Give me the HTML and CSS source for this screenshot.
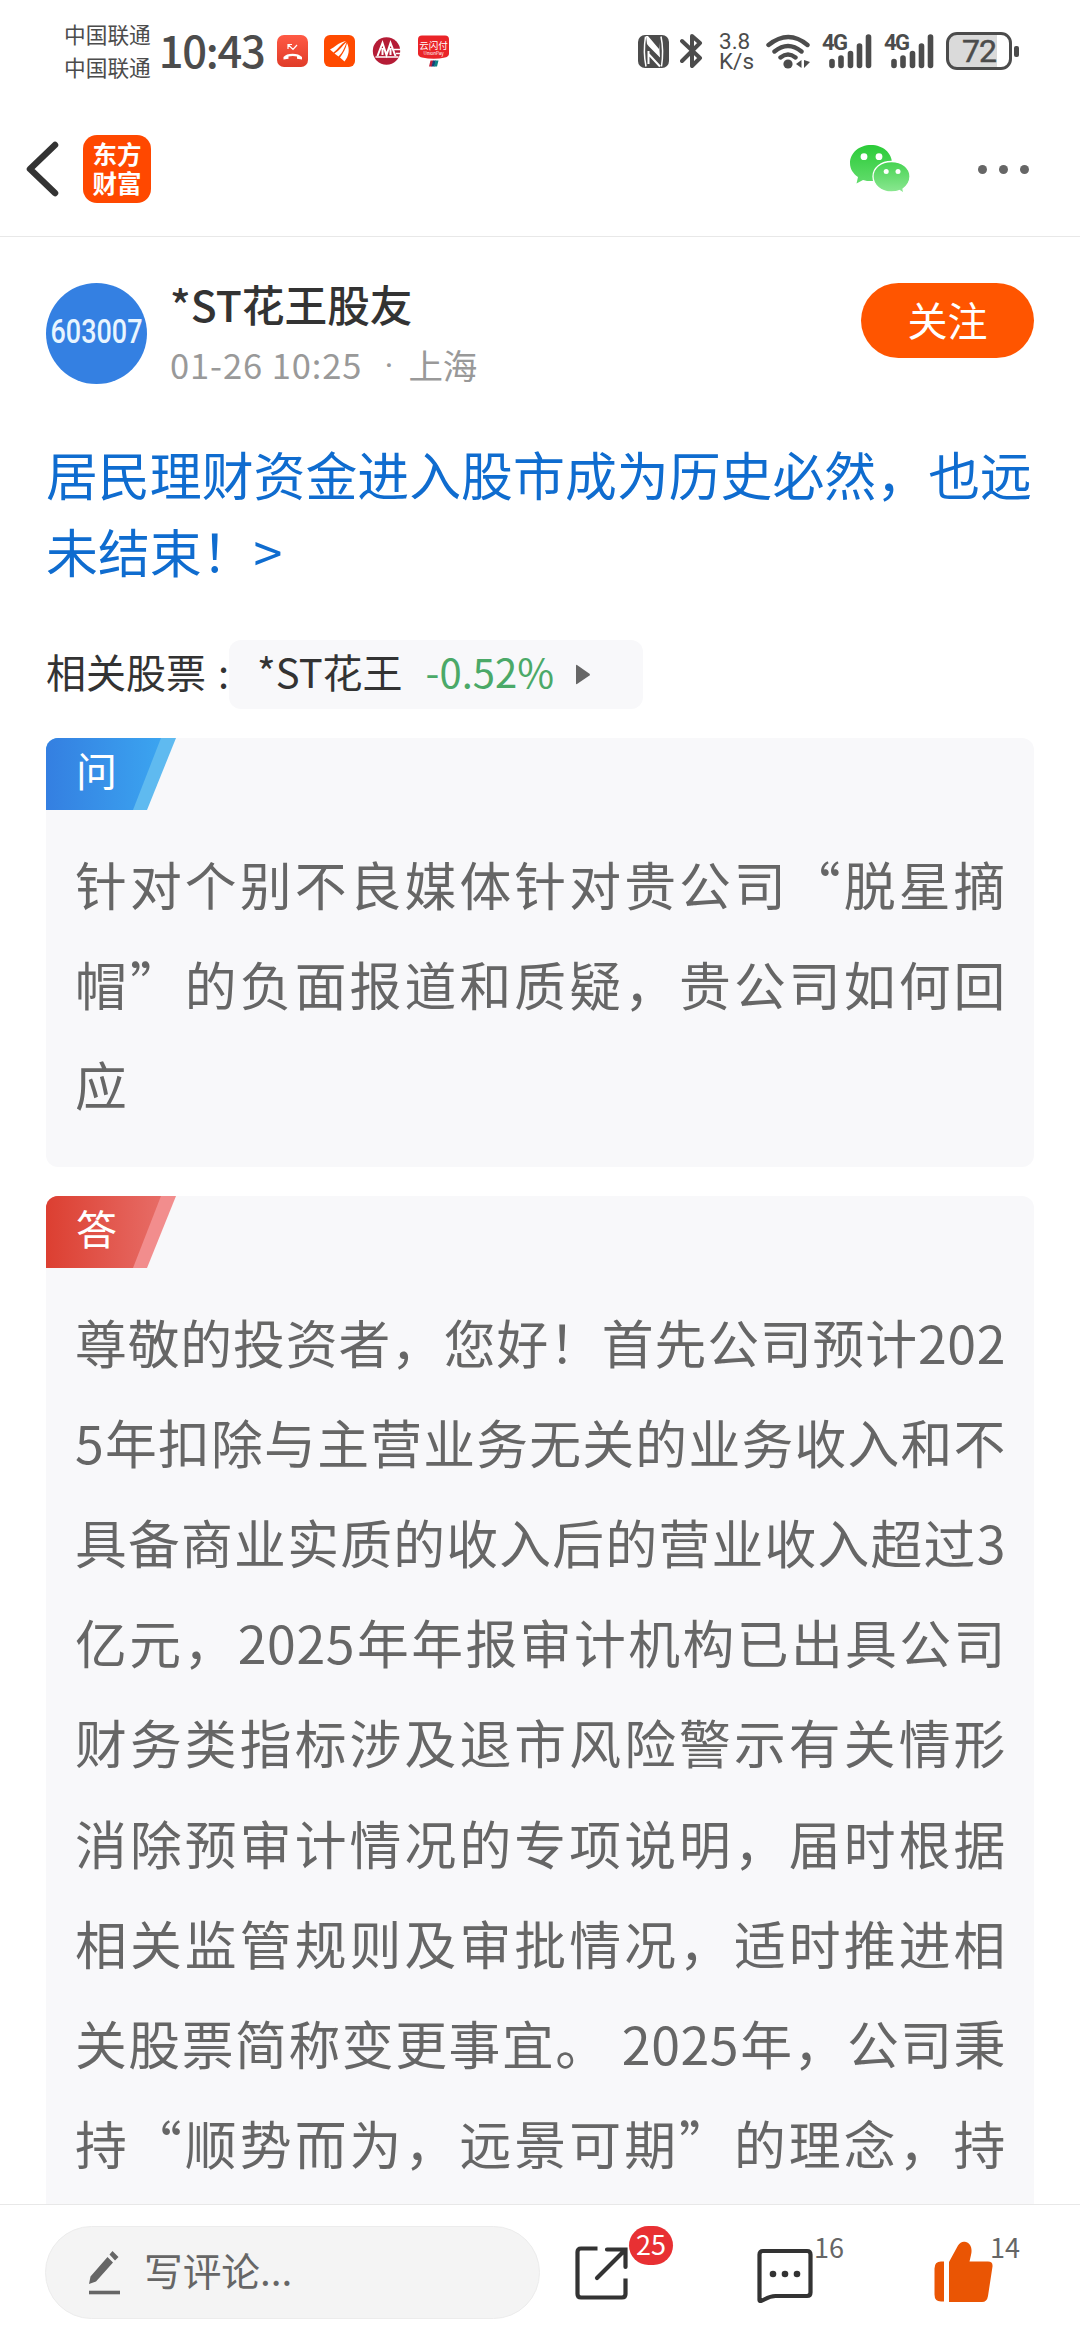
FILE: index.html
```html
<!DOCTYPE html>
<html lang="zh-CN">
<head>
  <meta charset="UTF-8" />
  <meta name="viewport" content="width=device-width, initial-scale=1.0"/>
  <title>*ST花王股吧</title>
  <link rel="stylesheet" href="styles.css">
</head>
<body>

  <!-- ===== STATUS BAR ===== -->
  <div class="status-bar">
    <div class="carrier">
      <span>中国联通</span>
      <span>中国联通</span>
    </div>
    <span class="time">10:43</span>
    <div class="notices">
      <svg width="31" height="32" viewBox="0 0 31 32">
        <defs><linearGradient id="call" x1="0" y1="0" x2="0" y2="1"><stop offset="0" stop-color="#ff5a45"/><stop offset="1" stop-color="#e03c28"/></linearGradient></defs>
        <rect width="31" height="32" rx="7" fill="url(#call)"/>
        <path d="M6.500 24v-2c3-4.500 15-4.500 18.500 0v2.500l-5-.8v-2.200c-2.500-.7-6-.7-8.500 0v2.200l-5 .8z" fill="#fff"/>
        <path d="M11 14V9.500h4M11.500 10l4.500 4.500 4-4.500" fill="none" stroke="#fff" stroke-width="1.200"/>
      </svg>
      <svg width="31" height="32" viewBox="0 0 31 32">
        <rect width="31" height="32" rx="6" fill="#ff4a00"/>
        <path d="M6 14.500c5-2 8-7 16-8.500-5 3-8 8-12.500 11.500zM10.500 18.500c5-3 8-8 12-11.500-1.500 5-4 11-8 14.500zM16 22.500c3-4 6-9 7-14.500 3 6 2 13-2.500 18.500z" fill="#fff"/>
      </svg>
      <svg width="31" height="32" viewBox="0 0 31 32">
        <circle cx="15.500" cy="16" r="13.700" fill="#b51c36"/>
        <path d="M6.500 21L11.500 8l4 12L19.500 8l5 13M11.500 13v7M19.500 13v7" fill="none" stroke="#fff" stroke-width="2"/>
        <path d="M23 14.500h7M4.500 22h23M25 18.500h5" fill="none" stroke="#fff" stroke-width="1.600"/>
      </svg>
      <svg width="31" height="32" viewBox="0 0 31 32">
        <path d="M4 .5h23q4 0 4 4v14q0 3-4 4-11 2.500-23 0-4-1-4-4v-14q0-4 4-4z" fill="#ea2428"/>
        <text x="15.500" y="13.500" text-anchor="middle" class="pay-cn">云闪付</text>
        <text x="15.500" y="20" text-anchor="middle" class="pay-en">UnionPay</text>
        <path d="M12.500 25.500h3l-1.500 6h-3z" fill="#c2203a"/>
        <path d="M15 25.500h3l-1.500 6h-3z" fill="#173f78"/>
        <path d="M17.500 25.500h3l-1.500 6h-3z" fill="#0b8184"/>
      </svg>
    </div>
    <div class="signals">
      <!-- nfc -->
      <svg width="31" height="33" viewBox="0 0 31 33">
        <rect width="31" height="33" rx="7" fill="#4c4c4c"/>
        <path d="M7.500 1.500C6 11 6 22 8 31.500M23 1.500c2 9.500 2 20 .5 30" fill="none" stroke="#fff" stroke-width="1.500"/>
        <path d="M8 1h2l11 13V7.500l1 15L10.500 11 9 9z" fill="#fff"/>
        <path d="M10.500 16v13M10.500 19L22 31.500" fill="none" stroke="#fff" stroke-width="2"/>
      </svg>
      <!-- bluetooth -->
      <svg class="bt" width="23" height="36" viewBox="0 0 23 36">
        <path d="M2 8l18 17-8 8V3l8 7L2 28" fill="none" stroke="#4c4c4c" stroke-width="4" stroke-linecap="round" stroke-linejoin="round"/>
      </svg>
      <div class="speed">
        <span>3.8</span>
        <span>K/s</span>
      </div>
      <!-- wifi -->
      <svg class="wifi" width="45" height="36" viewBox="0 0 45 36">
        <path d="M2.500 12q20-16 39 0M8.500 18.500q13.500-11 27 0M14.500 24.500q7.500-6 15 0" fill="none" stroke="#4c4c4c" stroke-width="4.400" stroke-linecap="round"/>
        <circle cx="22" cy="31" r="4.600" fill="#4c4c4c"/>
        <path d="M35.500 27v8l-5.500-4zM38 27v8l6-6z" fill="#4c4c4c"/>
      </svg>
      <div class="cell">
        <span>4G</span>
        <svg width="50" height="36" viewBox="0 0 50 36">
          <path d="M10 28.500v4M19 25v7.500M28.500 20.500v12M37.500 13v19.500M46.500 4v28.500" stroke="#4c4c4c" stroke-width="5.600" stroke-linecap="round"/>
        </svg>
      </div>
      <div class="cell">
        <span>4G</span>
        <svg width="50" height="36" viewBox="0 0 50 36">
          <path d="M10 28.500v4M19 25v7.500M28.500 20.500v12M37.500 13v19.500M46.500 4v28.500" stroke="#4c4c4c" stroke-width="5.600" stroke-linecap="round"/>
        </svg>
      </div>
      <div class="battery"><span>72</span></div>
      <i class="nub"></i>
    </div>
  </div>

  <!-- ===== HEADER ===== -->
  <div class="navbar">
    <svg class="back" width="33" height="56" viewBox="0 0 33 56">
      <path d="M29 4L4 28l25 24" fill="none" stroke="#333" stroke-width="6.500" stroke-linecap="round" stroke-linejoin="round"/>
    </svg>
    <div class="logo"><span>东方</span><span>财富</span></div>
    <svg class="wechat" width="62" height="50" viewBox="0 0 62 50">
      <defs>
        <linearGradient id="wx1" x1="0" y1="0" x2="0" y2="1"><stop offset="0" stop-color="#2bcb38"/><stop offset="1" stop-color="#62dc6c"/></linearGradient>
        <linearGradient id="wx2" x1="0" y1="0" x2="0" y2="1"><stop offset="0" stop-color="#45d351"/><stop offset="1" stop-color="#8ee894"/></linearGradient>
      </defs>
      <path d="M22 1C10 1 1 9 1 19c0 6 3 10.500 8 14l-1.500 6.500L14 36c3 1 5 1 8 1 12 0 21-8 21-18S34 1 22 1z" fill="url(#wx1)"/>
      <path d="M42.500 17.500C32 17.500 24 24 24 32.500S32 48 42.500 48q5 0 8-1.500l4.500 3-1-4.500c4-3 7-7.500 7-12.500 0-8.500-8-15-18.500-15z" fill="url(#wx2)" stroke="#fff" stroke-width="1.300"/>
      <circle cx="15" cy="12.700" r="3.400" fill="#fff"/>
      <circle cx="30" cy="12.700" r="3.400" fill="#fff"/>
      <circle cx="37.200" cy="27.500" r="2.500" fill="#fff"/>
      <circle cx="49" cy="27.500" r="2.500" fill="#fff"/>
    </svg>
    <div class="more"><i></i><i></i><i></i></div>
  </div>

  <!-- ===== POST ===== -->
  <div class="post">
    <div class="author">
      <svg class="avatar" width="101" height="101" viewBox="0 0 101 101">
        <circle cx="50.500" cy="50.500" r="50.500" fill="#3480e2"/>
        <text x="4.500" y="60" textLength="92" lengthAdjust="spacingAndGlyphs">603007</text>
      </svg>
      <div class="info">
        <div class="name">*ST花王股友</div>
        <div class="meta"><span>01-26 10:25</span><span class="dot">·</span><span class="place">上海</span></div>
      </div>
      <button class="btn-follow">关注</button>
    </div>

    <h1>居民理财资金进入股市成为历史必然，也远<br>未结束！&gt;</h1>

    <div class="stock">
      <span class="label">相关股票 :</span>
      <div class="chip">
        <span>*ST花王</span>
        <span class="change">-0.52%</span>
        <svg width="16" height="21" viewBox="0 0 16 21"><path d="M1 1.500v18q0 1 1 .5L14.500 11.500q1-.9 0-1.800L2 1Q1 .5 1 1.500z" fill="#666"/></svg>
      </div>
    </div>

    <div class="card ask">
      <div class="tag"><svg width="130" height="72" viewBox="0 0 130 72">
        <defs><linearGradient id="blue" x1="0" x2="1"><stop offset="0" stop-color="#347fe1"/><stop offset="1" stop-color="#3ba4f0"/></linearGradient></defs>
        <path d="M0 0h130l-29 72H0z" fill="#5fbaf0"/>
        <path d="M0 0h115L87 72H0z" fill="url(#blue)"/>
      </svg><span>问</span></div>
      <div class="text">
        <p>针对个别不良媒体针对贵公司“脱星摘</p>
        <p>帽”的负面报道和质疑，贵公司如何回</p>
        <p class="last">应</p>
      </div>
    </div>

    <div class="card answer">
      <div class="tag"><svg width="130" height="72" viewBox="0 0 130 72">
        <defs><linearGradient id="red" x1="0" x2="1"><stop offset="0" stop-color="#dc3f31"/><stop offset="1" stop-color="#e76c66"/></linearGradient></defs>
        <path d="M0 0h130l-29 72H0z" fill="#f28d8d"/>
        <path d="M0 0h115L87 72H0z" fill="url(#red)"/>
      </svg><span>答</span></div>
      <div class="text">
        <p>尊敬的投资者，您好！首先公司预计202</p>
        <p>5年扣除与主营业务无关的业务收入和不</p>
        <p>具备商业实质的收入后的营业收入超过3</p>
        <p>亿元，2025年年报审计机构已出具公司</p>
        <p>财务类指标涉及退市风险警示有关情形</p>
        <p>消除预审计情况的专项说明，届时根据</p>
        <p>相关监管规则及审批情况，适时推进相</p>
        <p>关股票简称变更事宜。 2025年，公司秉</p>
        <p>持“顺势而为，远景可期”的理念，持</p>
      </div>
    </div>
  </div>

  <!-- ===== BOTTOM BAR ===== -->
  <div class="toolbar">
    <div class="comment-box">
      <svg width="33" height="46" viewBox="0 0 33 46">
        <path d="M1 34l1.500-7.500L19.500 7l5.500 5.500L8 31.500zM21.500 4.500L24.500 1l6 6-3.500 3.500z" fill="#666"/>
        <path d="M1 42.500h31" stroke="#666" stroke-width="3.600"/>
      </svg>
      <span>写评论...</span>
    </div>
    <div class="action share">
      <svg width="55" height="56" viewBox="0 0 55 56">
        <path d="M22.500 3.500H6q-3.500 0-3.500 3.500v42q0 3.500 3.500 3.500h41q3.500 0 3.500-3.500V33.500" fill="none" stroke="#333" stroke-width="4.200"/>
        <path d="M32 4.500h18.500V22M50 5L22 33" fill="none" stroke="#333" stroke-width="4.200" stroke-linecap="round"/>
      </svg>
      <span class="badge">25</span>
    </div>
    <div class="action reply">
      <svg width="56" height="55" viewBox="0 0 56 55">
        <path d="M6 3h44q3.500 0 3.500 3.500v38q0 3.500-3.500 3.500H18.500C10 48 7 53 3.500 53q-1 0-1-1V6.500Q2.500 3 6 3z" fill="none" stroke="#333" stroke-width="4.200"/>
        <circle cx="16" cy="26" r="3.300" fill="#333"/>
        <circle cx="28" cy="26" r="3.300" fill="#333"/>
        <circle cx="40" cy="26" r="3.300" fill="#333"/>
      </svg>
      <span class="count">16</span>
    </div>
    <div class="action like">
      <svg width="60" height="62" viewBox="0 0 60 62">
        <path d="M10 20.500H7q-6.500 0-6.500 7v26q0 7 6.500 7h3zM15 61V21L24 4.500C26 1 29 0 32 1c5 1.500 6.500 7 5 13l-1.500 6.500H54q5 0 4.500 5L54 55q-1 6-6 6z" fill="#ea5504"/>
      </svg>
      <span class="count">14</span>
    </div>
  </div>

</body>
</html>
```
FILE: styles.css
```css
* {
  box-sizing: border-box;
  margin: 0;
  padding: 0;
}

body {
  width: 1080px;
  height: 2340px;
  overflow: hidden;
  display: flex;
  flex-direction: column;
  font-family: "Noto Sans CJK SC", sans-serif;
  background-color: #fff;
  color: #333;
}

svg {
  display: block;
  flex: none;
}

/* status bar */
.status-bar {
  height: 102px;
  padding: 0 61px 0 64px;
  display: flex;
  align-items: center;
  color: #4c4c4c;
}

.carrier {
  margin-top: -3px;
}

.carrier span {
  display: block;
  font-size: 21.7px;
  line-height: 33px;
}

.time {
  width: 112px;
  margin: -2px 0 0 8px;
  font-size: 43.5px;
  font-weight: 500;
  line-height: 60px;
  letter-spacing: -1.3px;
}

.notices {
  display: flex;
  gap: 16px;
  margin-left: 6px;
}

.pay-cn {
  font-size: 9.5px;
  fill: #fff;
}

.pay-en {
  font-size: 4.5px;
  fill: #fff;
}

.signals {
  display: flex;
  align-items: center;
  margin-left: auto;
}

.bt {
  margin-left: 11px;
}

.speed {
  width: 34px;
  margin-left: 16px;
}

.speed span {
  display: block;
  font-family: Roboto, sans-serif;
  font-size: 22.5px;
  line-height: 20px;
}

.wifi {
  margin-left: 13px;
}

.cell {
  position: relative;
  margin-left: 11px;
}

.cell + .cell {
  margin-left: 12px;
}

.cell span {
  position: absolute;
  left: 0;
  top: -1px;
  font-family: Roboto, sans-serif;
  font-size: 22px;
  font-weight: 700;
  line-height: 22px;
  letter-spacing: -1.5px;
}

.battery {
  width: 66px;
  height: 38px;
  margin-left: 12px;
  border: 3px solid #4c4c4c;
  border-radius: 11px;
  background: linear-gradient(to right, #dadada 48px, #fff 48px);
  text-align: center;
}

.battery span {
  display: block;
  font-family: Roboto, sans-serif;
  font-size: 32px;
  line-height: 33px;
  letter-spacing: -1px;
  -webkit-text-stroke: 0.5px #4c4c4c;
}

.nub {
  width: 5px;
  height: 11px;
  margin-left: 2px;
  border-radius: 2px;
  background: #4c4c4c;
}

/* header */
.navbar {
  height: 135px;
  padding: 0 51px 0 26px;
  display: flex;
  align-items: center;
  border-bottom: 1px solid #e8e8e8;
}

.logo {
  width: 68px;
  height: 68px;
  margin-left: 24px;
  padding-top: 4px;
  border-radius: 14px;
  background: #ff4800;
  color: #fff;
  text-align: center;
}

.logo span {
  display: block;
  font-size: 24.5px;
  font-weight: 700;
  line-height: 29px;
}

.wechat {
  margin-left: auto;
}

.more {
  display: flex;
  gap: 12px;
  margin-left: 67px;
}

.more i {
  width: 9px;
  height: 9px;
  border-radius: 50%;
  background: #666;
}

/* post */
.post {
  flex: 1;
  min-height: 0;
  overflow: hidden;
  padding: 46px 46px 0;
}

.author {
  height: 103px;
  display: flex;
  align-items: flex-start;
}

.avatar text {
  font-family: Roboto, sans-serif;
  font-size: 34px;
  font-weight: 500;
  fill: #e8f5ff;
}

.info {
  margin: -2px 0 0 23px;
}

.name {
  font-size: 42.7px;
  font-weight: 500;
  line-height: 44px;
}

.meta {
  display: flex;
  margin-top: 17px;
  font-size: 34.5px;
  line-height: 44px;
  letter-spacing: 0.9px;
  color: #999;
}

.dot {
  width: 46px;
  padding: 2px 0 0 8px;
  font-family: Roboto, sans-serif;
  text-align: center;
}

.place {
  letter-spacing: 0;
}

.btn-follow {
  width: 173px;
  height: 75px;
  margin-left: auto;
  padding-bottom: 3px;
  border: none;
  border-radius: 38px;
  background-color: #ff5500;
  color: #fff;
  font-family: inherit;
  font-size: 40px;
}

h1 {
  margin-top: 49px;
  font-size: 51.9px;
  font-weight: 400;
  line-height: 77px;
  color: #0f6ccf;
  white-space: nowrap;
}

.stock {
  display: flex;
  align-items: center;
  margin-top: 51px;
  height: 69px;
  font-size: 40px;
}

.label {
  width: 183px;
  padding-bottom: 7px;
  word-spacing: 3px;
  white-space: nowrap;
}

.chip {
  width: 414px;
  height: 69px;
  padding-left: 28px;
  display: flex;
  align-items: center;
  border-radius: 12px;
  background: #f8f8fa;
}

.chip span {
  padding-bottom: 7px;
}

.change {
  margin: 0 21px 0 23px;
  color: #4ba968;
}

.card {
  margin-top: 29px;
  border-radius: 12px;
  background: #f8f8fa;
  overflow: hidden;
}

.tag {
  position: relative;
  height: 72px;
}

.tag span {
  position: absolute;
  left: 30px;
  top: 3px;
  font-size: 41px;
  line-height: 56px;
  color: #fff;
}

.text {
  padding: 24px 28px 32px 29px;
  font-size: 51.8px;
  line-height: 100.2px;
  letter-spacing: 0.6px;
  color: #666;
}

.text p {
  text-align: justify;
  text-align-last: justify;
  text-spacing-trim: space-all;
  white-space: nowrap;
}

.text .last {
  text-align-last: left;
}

/* bottom bar */
.toolbar {
  flex: none;
  height: 136px;
  padding: 21px 0 0 45px;
  display: flex;
  border-top: 1px solid #e8e8e8;
  background: #fff;
}

.comment-box {
  width: 495px;
  height: 93px;
  padding-left: 42px;
  display: flex;
  align-items: center;
  border: 1px solid #ececec;
  border-radius: 47px;
  background: #f4f4f4;
  color: #666;
  font-size: 38.7px;
}

.comment-box span {
  margin-left: 23px;
  padding-bottom: 7px;
}

.action {
  position: relative;
}

.share {
  margin: 19px 0 0 35px;
}

.reply {
  margin: 22px 0 0 127px;
}

.like {
  margin: 15px 0 0 121px;
}

.badge {
  position: absolute;
  left: 54px;
  top: -19px;
  width: 44px;
  height: 39px;
  border-radius: 20px;
  background: #e83033;
  color: #fff;
  font-size: 27px;
  line-height: 36px;
  text-align: center;
}

.count {
  position: absolute;
  left: 57px;
  top: -19px;
  font-size: 27px;
  line-height: 36px;
  color: #666;
}

.like .count {
  left: 56px;
  top: -12px;
}
```
